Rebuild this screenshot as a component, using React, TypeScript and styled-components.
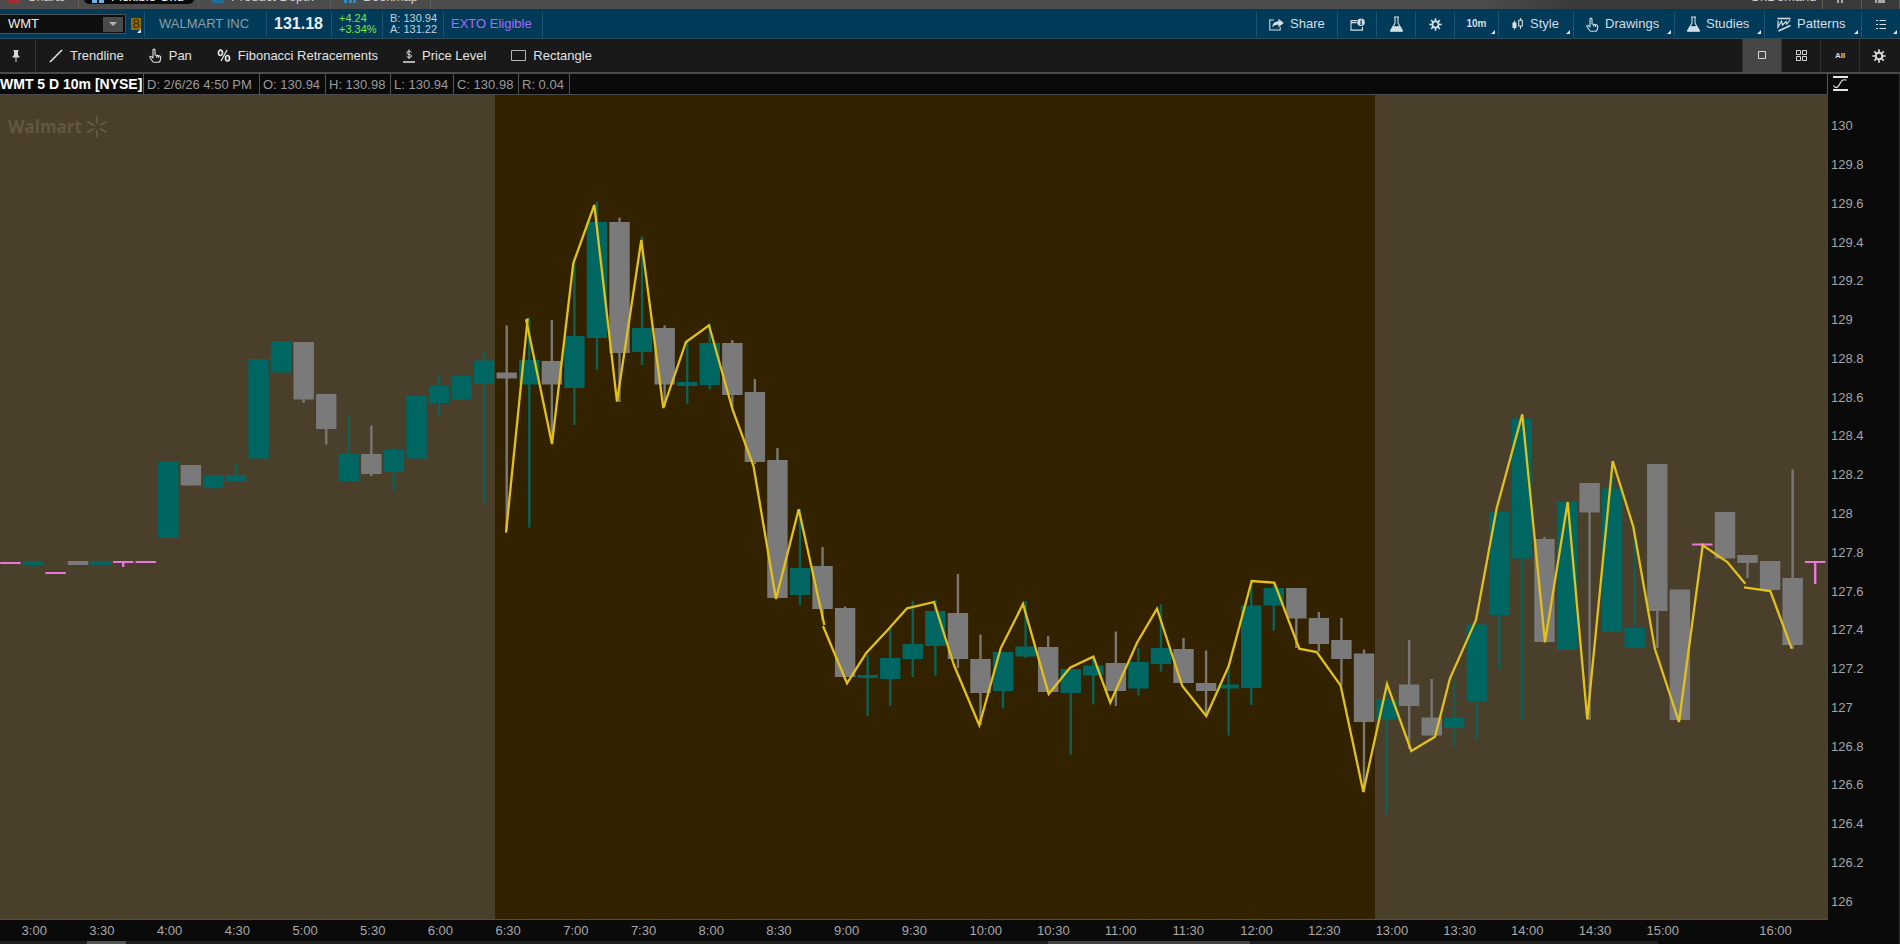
import React from 'react';
import styled, { createGlobalStyle } from 'styled-components';

const GlobalStyle = createGlobalStyle`
  * { box-sizing: border-box; }
  body { margin: 0; background: #0a0a0a; overflow: hidden; }
  button, input { font: inherit; color: inherit; margin: 0; padding: 0; border: 0; background: none; border-radius: 0; }
  button { cursor: pointer; white-space: nowrap; }
  svg { display: block; flex: none; }
`;

const Shell = styled.div`
  display: flex;
  flex-direction: column;
  height: 100vh;
  font: 13px/16px "Liberation Sans", Arial, sans-serif;
  color: #dcdcdc;
  background: #0a0a0a;
`;

/* ---------- window tabs ---------- */
const TabStrip = styled.nav`
  display: flex;
  flex: none;
  align-items: flex-end;
  height: 9px;
  overflow: hidden;
  background: linear-gradient(90deg, #4c4c4c 0 78%, #3a3a3a 83% 100%);
`;
const Tab = styled.button<{ $w: number; $pad: number }>`
  display: flex;
  align-items: flex-end;
  gap: 7px;
  width: ${(p) => p.$w}px;
  height: 24px;
  padding: 0 0 5px ${(p) => p.$pad}px;
  line-height: 14px;
  border-right: 1px solid #5c5c5c;
  color: #d0d0d0;
`;
const ActiveTab = styled(Tab)`
  color: #ffffff;
`;
const ActivePill = styled.span`
  display: flex;
  align-items: flex-end;
  gap: 7px;
  width: 110px;
  height: 19px;
  padding: 0 8px;
  border-radius: 0 0 5px 5px;
  background: #0a0a0a;
`;
const TabIcon = styled.span<{ $c: string }>`
  flex: none;
  width: 12px;
  height: 14px;
  border-bottom: 1px solid transparent;
  background: ${(p) => p.$c};
  background-clip: padding-box;
`;
const Spacer = styled.div`
  flex: 1;
`;

/* ---------- symbol bar ---------- */
const SymbolBar = styled.header`
  display: flex;
  flex: none;
  align-items: center;
  height: 30px;
  padding-top: 1px;
  background: #003a59;
  border-bottom: 1px solid #2c4a58;
`;
const SymbolBox = styled.div`
  display: flex;
  align-items: center;
  width: 126px;
  height: 20px;
  padding-right: 2px;
  background: #0f0f0f;
  border: 1px solid #4a5258;
  border-left: 0;
`;
const SymbolInput = styled.input`
  flex: 1;
  min-width: 0;
  padding-left: 8px;
  outline: none;
  color: #ececec;
`;
const DropButton = styled.button`
  display: grid;
  place-items: center;
  width: 20px;
  height: 15px;
  background: #4a4a4a;
`;
const LinkButton = styled.button`
  position: relative;
  width: 10px;
  height: 12px;
  margin: 0 3px 0 5px;
  background: #94690a;
  color: #2f2c12;
  font-size: 13px;
  line-height: 12px;
`;
const LinkCorner = styled.i`
  position: absolute;
  right: 0;
  bottom: -3px;
  border: 2px solid transparent;
  border-right-color: #dfe7ec;
  border-bottom-color: #dfe7ec;
`;
const BarCell = styled.div<{ $w: number; $pad: number }>`
  display: flex;
  flex-direction: column;
  justify-content: center;
  width: ${(p) => p.$w}px;
  height: 25px;
  padding-left: ${(p) => p.$pad}px;
  border-left: 1px solid #1d5370;
  white-space: nowrap;
`;
const Company = styled.span`
  color: #8d9da8;
`;
const LastPrice = styled.strong`
  font-size: 16px;
  color: #e8eef2;
`;
const Small = styled.span<{ $c: string }>`
  font-size: 11px;
  line-height: 11px;
  color: ${(p) => p.$c};
`;
const Note = styled.span`
  color: #a56bff;
`;
const BarButton = styled.button<{ $w: number; $center?: boolean }>`
  position: relative;
  display: flex;
  align-items: center;
  justify-content: ${(p) => (p.$center ? 'center' : 'flex-start')};
  gap: 6px;
  width: ${(p) => p.$w}px;
  height: 25px;
  padding-left: ${(p) => (p.$center ? 0 : 12)}px;
  border-left: 1px solid #1d5370;
  color: #d3dee6;
`;
const Corner = styled.i`
  position: absolute;
  right: 3px;
  bottom: 3px;
  border: 2px solid transparent;
  border-right-color: #dfe7ec;
  border-bottom-color: #dfe7ec;
`;
const Interval = styled.b`
  font-size: 10px;
`;

/* ---------- drawing toolbar ---------- */
const DrawBar = styled.div`
  display: flex;
  flex: none;
  align-items: center;
  height: 35px;
  padding-right: 2px;
  background: #191919;
  border-bottom: 2px solid #4b4b4b;
`;
const PinButton = styled.button`
  display: grid;
  place-items: center;
  width: 36px;
  height: 33px;
  padding-right: 3px;
  border-right: 1px solid #333;
  color: #d8d8d8;
`;
const Tools = styled.div`
  display: flex;
  gap: 25px;
  padding-left: 13px;
`;
const Tool = styled.button`
  display: flex;
  align-items: center;
  gap: 7px;
  color: #e2e2e2;
`;
const ViewButton = styled.button<{ $on?: boolean }>`
  display: grid;
  place-items: center;
  width: 39px;
  height: 33px;
  border-left: 1px solid #303030;
  background: ${(p) => (p.$on ? '#464646' : 'none')};
  color: #d8d8d8;
  font-size: 8px;
  font-weight: 700;
  line-height: 12px;
`;

/* ---------- chart ---------- */
const Body = styled.main`
  display: flex;
  flex: 1;
  min-height: 0;
`;
const ChartColumn = styled.section`
  display: flex;
  flex-direction: column;
  flex: 1;
  min-width: 0;
`;
const InfoRow = styled.div`
  display: flex;
  flex: none;
  height: 21px;
  border-right: 1px solid #555;
  border-bottom: 1px solid #4a4a4a;
`;
const Info = styled.span<{ $w: number }>`
  width: ${(p) => p.$w}px;
  padding-left: 3px;
  line-height: 21px;
  color: #9a9a9a;
  border-right: 1px solid #555;
  white-space: nowrap;
`;
const Title = styled.h1`
  width: 144px;
  margin: 0;
  font-size: 14px;
  line-height: 21px;
  color: #fff;
  border-right: 1px solid #555;
  white-space: nowrap;
`;
const Plot = styled.div`
  position: relative;
  flex: 1;
  min-height: 0;
  background: #4a3f2a;
  border-bottom: 1px solid #55502e;
  & > svg { width: 100%; height: 100%; }
`;
const Watermark = styled.div`
  position: absolute;
  top: 20px;
  left: 8px;
  display: flex;
  align-items: center;
  gap: 4px;
  font: 700 17px/24px "Open Sans", sans-serif;
  color: #615743;
`;
const TimeAxis = styled.div`
  display: grid;
  flex: none;
  grid-template-columns: repeat(81, minmax(0, 1fr));
  height: 21px;
`;
const TimeLabel = styled.span<{ $slot: number }>`
  grid-row: 1;
  grid-column: ${(p) => p.$slot + 1} / span 3;
  margin-left: -1px;
  line-height: 21px;
  color: #a8a8a8;
`;
const ScrollTrack = styled.div`
  display: grid;
  flex: none;
  grid-template-columns: 87fr 39fr 922fr 202fr 408fr 170fr;
  height: 3px;
  overflow: hidden;
  background: #1e1e1e;
`;
const Thumb = styled.div<{ $col: number; $c: string }>`
  grid-row: 1;
  grid-column: ${(p) => p.$col};
  background: ${(p) => p.$c};
`;
const PriceColumn = styled.aside`
  display: flex;
  flex-direction: column;
  flex: none;
  width: 72px;
  padding-bottom: 23px;
  border-right: 1px solid #14323f;
`;
const ScaleButton = styled.button`
  display: flex;
  flex: none;
  height: 33px;
  padding: 2px 0 0 5px;
  color: #e4e4e4;
`;
const Prices = styled.div`
  display: grid;
  flex: 1;
  grid-auto-rows: 1fr;
  align-items: center;
  padding-left: 3px;
  color: #a4a4a4;
`;

/* ---------- icons ---------- */
const HandIcon = () => (
  <svg width="13" height="15" viewBox="0 0 13 15" fill="none" stroke="currentColor" strokeWidth="1.1" strokeLinejoin="round" strokeLinecap="round">
    <path d="M4 9V2.2C4 .7 6 .7 6 2.2V7l4.4.9c1 .2 1.5.9 1.4 1.8l-.5 2.8c-.3 1.2-1 1.8-2.2 1.8H5.4c-.9 0-1.4-.4-1.9-1.1L1 9.7c-.5-1 .6-1.9 1.4-1.1L4 10M7.7 7.5v1.8M9.5 8v1.6" />
  </svg>
);
const FlaskIcon = () => (
  <svg width="13" height="16" viewBox="0 0 13 16" fill="none" stroke="currentColor" strokeWidth="1.1">
    <path d="M4 1h5M5 1v6L1.800 13M8 1v6l3.200 6" />
    <path d="M3 10.800h7l2.300 3.500v.9H.7v-.9z" fill="currentColor" />
  </svg>
);
const GearIcon = ({ s = 13 }: { s?: number }) => (
  <svg width={s} height={s} viewBox="0 0 14 14" fill="none" stroke="currentColor">
    <circle cx="7" cy="7" r="3.3" strokeWidth="2" />
    <path strokeWidth="1.7" d="M7 .3v3M7 10.7v3M.3 7h3M10.7 7h3M2.3 2.3l2 2M9.7 9.7l2 2M11.7 2.3l-2 2M2.3 11.7l2-2" />
  </svg>
);
const ShareIcon = () => (
  <svg width="15" height="13" viewBox="0 0 15 13" fill="none" stroke="currentColor" strokeWidth="1.1">
    <path d="M5 2H.8v10h10.400V9" />
    <path d="M9.500.8L14.800 5l-5.300 4.200V6.800C6.500 6.500 4.600 7.500 3.200 9.500 3.400 5.500 5.800 3.300 9.500 3.200z" fill="currentColor" stroke="none" />
  </svg>
);
const AlertIcon = () => (
  <svg width="15" height="13" viewBox="0 0 15 13" fill="none" stroke="currentColor" strokeWidth="1.1">
    <path d="M7 2.600H1v9.500h11.500V9M1 4.600h5.500" />
    <circle cx="11" cy="4.200" r="3.800" fill="currentColor" stroke="none" />
    <path d="M10.200 3.500h1v2.500M10 6.200h2.200M10.700 1.900h1" stroke="#003a59" />
  </svg>
);
const CandlesIcon = () => (
  <svg width="13" height="14" viewBox="0 0 13 14" fill="none" stroke="currentColor" strokeWidth="1.100">
    <path d="M3.500 3.500v9M9.500 1v2M9.500 9v3" />
    <path d="M2 6h3v4.500H2z" fill="currentColor" />
    <path d="M7.700 3.200h3.600V9H7.700z" />
  </svg>
);
const PatternsIcon = () => (
  <svg width="14" height="15" viewBox="0 0 14 15" fill="none" stroke="currentColor" strokeWidth="1.200">
    <path d="M.5 1.500h13M1.500 14l12-5.500" strokeWidth="1.500" />
    <path d="M1 3.500v6.500l3.500-6 1 4L9 4.500l.8 2.500L13 3" />
  </svg>
);
const ListIcon = () => (
  <svg width="11" height="11" viewBox="0 0 11 11" stroke="currentColor" strokeWidth="1">
    <path d="M0 1.500h2M0 5.500h2M0 9.500h2M3.500 1.500H10M3.500 5.500H10M3.500 9.500H10" />
  </svg>
);
const PinIcon = () => (
  <svg width="8" height="12" viewBox="0 0 8 12" fill="currentColor">
    <path d="M1.500 0h5v1H6v4l1.500 1.500v1h-3V12h-1V7.500h-3v-1L2 5V1h-.5z" />
  </svg>
);
const LineIcon = () => (
  <svg width="14" height="14" viewBox="0 0 14 14" stroke="currentColor" strokeWidth="1.600">
    <path d="M1 13L13 1" />
  </svg>
);
const PercentIcon = () => (
  <svg width="14" height="13" viewBox="0 0 14 13" fill="none" stroke="currentColor" strokeWidth="1.700">
    <ellipse cx="3.500" cy="3.800" rx="2" ry="2.700" />
    <ellipse cx="10.500" cy="9.200" rx="2" ry="2.700" />
    <path d="M10 1L4 12" strokeWidth="1.300" />
  </svg>
);
const DollarIcon = () => (
  <svg width="12" height="14" viewBox="0 0 12 14" fill="none" stroke="currentColor" strokeWidth="1">
    <path d="M0 13h12" strokeWidth="1.500" />
    <path d="M8.400 3.500C8 1.900 3.800 1.700 3.700 3.700c-.1 2 4.900 1.200 4.900 3.200 0 2-4.500 1.900-5.100.2M6 .5v9.500" />
  </svg>
);
const RectIcon = () => (
  <svg width="15" height="12" viewBox="0 0 15 12" fill="none" stroke="#b4b4b4" strokeWidth="1">
    <path d="M.5.500h14v10H.5z" />
  </svg>
);
const SingleIcon = () => (
  <svg width="8" height="9" viewBox="0 0 8 9" fill="none" stroke="currentColor" strokeWidth="1">
    <path d="M.5.500h7v7H.5z" />
  </svg>
);
const GridIcon = () => (
  <svg width="11" height="12" viewBox="0 0 11 12" fill="none" stroke="currentColor">
    <path d="M.5.500h4v4H.5zM6.500.500h4v4h-4zM.5 6.500h4v4H.5zM6.500 6.500h4v4h-4z" />
  </svg>
);
const ScaleIcon = () => (
  <svg width="15" height="16" viewBox="0 0 15 16" fill="none" stroke="currentColor">
    <path d="M0 1h15M0 14h15" strokeWidth="2" />
    <path d="M.5 9.500c1.500 2.800 3.500 2.800 5.200.2L8 5.800c1-1.800 3-2.500 5.500-1.600" strokeWidth="1.200" />
  </svg>
);
const SparkIcon = () => (
  <svg width="22" height="22" viewBox="0 0 22 22" stroke="#615743" strokeWidth="2" strokeLinecap="round">
    <path d="M11 1v6M11 15v6M2 6l5.500 3M14.500 13l5.500 3M20 6l-5.500 3M7.500 13L2 16" />
  </svg>
);

/* ---------- data ---------- */
type Kind = 'u' | 'd' | 'n';
// kind, body top, body bottom, wick top, wick bottom
const candles: [Kind, number, number, number, number][] = [
  ['n', 562, 564, 562, 564], ['u', 561, 565, 561, 567], ['n', 572, 574, 572, 574], ['d', 561, 565, 561, 565],
  ['u', 561, 565, 561, 566], ['n', 561, 563, 561, 567], ['n', 561, 563, 561, 563], ['u', 461.5, 538, 461.5, 538],
  ['d', 465, 485.5, 465, 485.5], ['u', 475, 487.5, 475, 490], ['u', 475, 481, 464, 481], ['u', 359, 458.5, 359, 458.5],
  ['u', 341, 372.5, 341, 372.5], ['d', 342, 399.5, 342, 403], ['d', 394, 429, 394, 444.5], ['u', 454, 481, 416.5, 481],
  ['d', 454, 474, 425.5, 476], ['u', 450, 472, 448, 491], ['u', 396, 458.5, 396, 458.5], ['u', 386, 403, 376, 416.5],
  ['u', 376, 399.5, 376, 399.5], ['u', 360.5, 384, 352, 504.5], ['d', 372.5, 378.5, 325.5, 530], ['u', 360, 384.5, 318, 527.5],
  ['d', 361, 384.5, 320, 440], ['u', 336, 388, 263, 425], ['u', 222, 338, 201.5, 369.5], ['d', 222, 353, 217.5, 402],
  ['u', 328, 352, 236.5, 365], ['d', 328, 384.5, 325.5, 406.5], ['u', 382, 386, 340, 403.5], ['u', 343, 385, 324, 389.5],
  ['d', 343, 395, 340, 406.5], ['d', 392, 462, 379, 464], ['d', 460, 598, 448, 598], ['u', 568, 595, 509, 605],
  ['d', 566, 609, 547, 620], ['d', 608, 677, 606.5, 677], ['u', 675, 678, 655, 716], ['u', 658, 679, 628, 706],
  ['u', 644, 659, 601, 677], ['u', 611, 646, 600, 675.5], ['d', 613, 659, 574, 668], ['d', 659, 693, 634.5, 725],
  ['u', 652, 691, 652, 708.5], ['u', 646.5, 656.5, 601, 658], ['d', 647, 692, 636, 692], ['u', 669, 693, 669, 754.5],
  ['u', 665.5, 675.5, 656.5, 704.5], ['d', 663, 691, 631.5, 706], ['u', 662, 688.5, 648, 695.5], ['u', 648, 664, 604.5, 671.5],
  ['d', 649, 683, 638, 683], ['d', 683, 691, 650.5, 715], ['u', 684.5, 688.5, 668, 735.5], ['u', 605.5, 688, 581.5, 705],
  ['u', 588, 605.5, 582.5, 630.5], ['d', 588, 618.5, 588, 648], ['d', 618, 644, 612, 651.5], ['d', 640, 659, 618, 685],
  ['d', 653.5, 722, 649.5, 792.5], ['u', 699, 720, 684, 814], ['d', 684.5, 706, 640, 749], ['d', 717.5, 735.5, 679, 735.5],
  ['u', 717.5, 728, 680.5, 747], ['u', 624.5, 701, 624.5, 740], ['u', 512, 615, 512, 670], ['u', 418.5, 558.5, 418.5, 720],
  ['d', 539, 642, 537, 642], ['u', 502, 650, 502, 650], ['d', 483, 512.5, 483, 720], ['u', 488.5, 632, 461, 632],
  ['u', 628, 648, 525, 648], ['d', 464, 611, 464, 648], ['d', 589.5, 720, 589.5, 720], ['n', 543.5, 545.5, 543.5, 545.5],
  ['d', 512, 558.5, 512, 558.5], ['d', 555, 563, 555, 578], ['d', 561, 590, 561, 590], ['d', 578, 645, 469.5, 649],
  ['n', 561, 563, 561, 584],
];
const fills: Record<Kind, string> = { u: '#006662', d: '#7a7a7a', n: '#e878dc' };
const wicks: Record<Kind, string> = { u: '#0a6257', d: '#7a7874', n: '#e878dc' };

const paths = [
  '506,532.7 527.7,318.3',
  '526,319.3 552,444 573.3,263.3 594.3,205 617,401.7 641.3,240 663.3,408 686,342 709,325.3 732.7,410 753.5,466 776,599 798.7,509.3 824.3,625',
  '823,626 847,683.3 866,653.3 888.3,629.3 907,608.3 934,602 954,665.3 979.3,725.3 1000.7,648.3 1023,604 1048.7,694 1070,667.7 1093.3,656.7 1110.3,702.7 1137,642.7 1157,608.7 1182.3,686 1206.3,716 1228.7,666 1251.7,581 1274.3,582.7 1299.3,648.7 1316.7,652 1340.7,685.7 1363.3,791.7 1387,684 1411.3,751 1435,736.7 1450,678.3 1476,620 1496.7,508.3 1522.3,414.3 1545,642.3 1567.7,502 1587.3,719.3 1612.7,461 1633.3,526.7 1655,649.3 1679,722 1702.7,545.3 1727.3,562 1745.3,583.7',
  '1744,587.3 1770.3,591 1791.7,648.7',
];

const times = Array.from({ length: 25 }, (_, k) => ({
  slot: 1 + k * 3,
  text: `${3 + Math.floor(k / 2)}:${k % 2 ? '30' : '00'}`,
}));
times.push({ slot: 78, text: '16:00' });

const prices = Array.from({ length: 21 }, (_, k) => String(Math.round(1300 - k * 2) / 10));

const info: [string, number][] = [
  ['D: 2/6/26 4:50 PM', 116], ['O: 130.94', 66], ['H: 130.98', 65], ['L: 130.94', 63], ['C: 130.98', 65], ['R: 0.04', 51],
];

const Chart = () => (
  <svg viewBox="0 95 1828 824" preserveAspectRatio="none" role="img" aria-label="WMT price chart">
    <rect x="495" y="95" width="880" height="824" fill="#322200" />
    {candles.map(([kind, top, bottom, high, low], i) => {
      const x = 10.4 + i * 22.56;
      return (
        <g key={i}>
          <rect x={x - 1.2} y={high} width="2.4" height={low - high} fill={wicks[kind]} />
          <rect x={x - 10.2} y={top} width="20.4" height={bottom - top} fill={fills[kind]} />
        </g>
      );
    })}
    {paths.map((p) => (
      <polyline key={p} points={p} fill="none" stroke="#e2c01e" strokeWidth="2.3" />
    ))}
  </svg>
);

export default function App() {
  return (
    <Shell>
      <GlobalStyle />
      <TabStrip>
        <Tab $w={79} $pad={8}><TabIcon $c="#a03030" />Charts</Tab>
        <ActiveTab $w={120} $pad={5}>
          <ActivePill><TabIcon $c="linear-gradient(90deg,#6fb4e6 0 5px,#0a0a0a 5px 7px,#6fb4e6 7px)" />Flexible Grid</ActivePill>
        </ActiveTab>
        <Tab $w={132} $pad={13}><TabIcon $c="#1f6f9c" />Product Depth</Tab>
        <Tab $w={100} $pad={13}><TabIcon $c="linear-gradient(90deg,#2390cc 0 3px,#4c4c4c 3px 5px,#2390cc 5px 8px,#4c4c4c 8px 9px,#2390cc 9px)" />Bookmap</Tab>
        <Spacer />
        <Tab $w={79} $pad={6}>OnDemand</Tab>
        <Tab $w={39} $pad={13} aria-label="Layout"><TabIcon $c="linear-gradient(90deg,transparent 1px,#aaa 1px 3px,transparent 3px 5px,#aaa 5px 7px,transparent 7px)" /></Tab>
        <Tab $w={38} $pad={13} aria-label="Menu"><TabIcon $c="linear-gradient(90deg,#aaa 0 2px,transparent 2px 3px,#aaa 3px 10px,transparent 10px)" /></Tab>
      </TabStrip>

      <SymbolBar>
        <SymbolBox>
          <SymbolInput aria-label="Symbol" defaultValue="WMT" />
          <DropButton aria-label="Choose symbol">
            <svg width="8" height="4" viewBox="0 0 8 4" fill="#b4b4b4"><path d="M0 0h8L4 4z" /></svg>
          </DropButton>
        </SymbolBox>
        <LinkButton aria-label="Link group 8">8<LinkCorner /></LinkButton>
        <BarCell $w={122} $pad={14}><Company>WALMART INC</Company></BarCell>
        <BarCell $w={65} $pad={7}><LastPrice>131.18</LastPrice></BarCell>
        <BarCell $w={51} $pad={7}><Small $c="#7be83a">+4.24</Small><Small $c="#7be83a">+3.34%</Small></BarCell>
        <BarCell $w={61} $pad={7}><Small $c="#c3d2dc">B: 130.94</Small><Small $c="#c3d2dc">A: 131.22</Small></BarCell>
        <BarCell $w={99} $pad={7}><Note>EXTO Eligible</Note></BarCell>
        <BarCell $w={1} $pad={0} />
        <Spacer />
        <BarButton $w={81}><ShareIcon />Share</BarButton>
        <BarButton $w={39} $center aria-label="Alerts"><AlertIcon /></BarButton>
        <BarButton $w={39} $center aria-label="Edit studies"><FlaskIcon /></BarButton>
        <BarButton $w={39} $center aria-label="Settings"><GearIcon /></BarButton>
        <BarButton $w={44} $center><Interval>10m</Interval><Corner /></BarButton>
        <BarButton $w={75}><CandlesIcon />Style<Corner /></BarButton>
        <BarButton $w={101}><HandIcon />Drawings<Corner /></BarButton>
        <BarButton $w={90}><FlaskIcon />Studies<Corner /></BarButton>
        <BarButton $w={97}><PatternsIcon />Patterns<Corner /></BarButton>
        <BarButton $w={39} $center aria-label="More"><ListIcon /><Corner /></BarButton>
      </SymbolBar>

      <DrawBar>
        <PinButton aria-label="Pin toolbar"><PinIcon /></PinButton>
        <Tools>
          <Tool><LineIcon />Trendline</Tool>
          <Tool><HandIcon />Pan</Tool>
          <Tool><PercentIcon />Fibonacci Retracements</Tool>
          <Tool><DollarIcon />Price Level</Tool>
          <Tool><RectIcon />Rectangle</Tool>
        </Tools>
        <Spacer />
        <ViewButton $on aria-label="Single chart"><SingleIcon /></ViewButton>
        <ViewButton aria-label="Grid"><GridIcon /></ViewButton>
        <ViewButton>All</ViewButton>
        <ViewButton aria-label="Chart settings"><GearIcon s={14} /></ViewButton>
      </DrawBar>

      <Body>
        <ChartColumn>
          <InfoRow>
            <Title>WMT 5 D 10m [NYSE]</Title>
            {info.map(([t, w]) => <Info key={t} $w={w}>{t}</Info>)}
          </InfoRow>
          <Plot>
            <Chart />
            <Watermark>Walmart<SparkIcon /></Watermark>
          </Plot>
          <TimeAxis>
            {times.map((t) => <TimeLabel key={t.slot} $slot={t.slot}>{t.text}</TimeLabel>)}
          </TimeAxis>
          <ScrollTrack>
            <Thumb $col={2} $c="#555" />
            <Thumb $col={4} $c="#444" />
            <Thumb $col={6} $c="#0a0a0a" />
          </ScrollTrack>
        </ChartColumn>
        <PriceColumn>
          <ScaleButton aria-label="Price scale"><ScaleIcon /></ScaleButton>
          <Prices>{prices.map((p) => <span key={p}>{p}</span>)}</Prices>
        </PriceColumn>
      </Body>
    </Shell>
  );
}
